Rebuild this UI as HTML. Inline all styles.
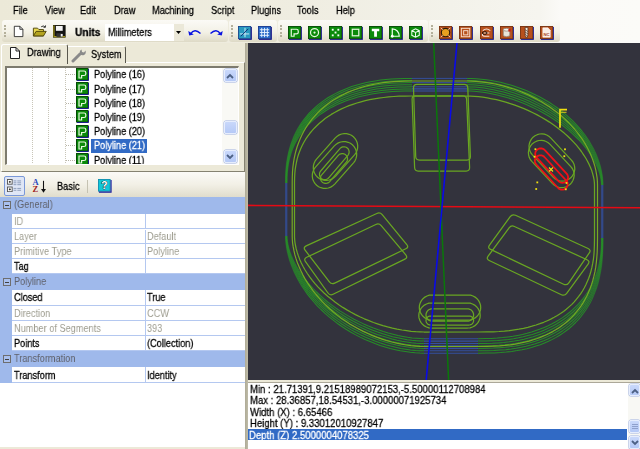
<!DOCTYPE html>
<html>
<head>
<meta charset="utf-8">
<title>CamBam</title>
<style>
*{box-sizing:border-box;margin:0;padding:0}
html,body{width:640px;height:449px;overflow:hidden;background:#ece9d8}
body{position:relative;font-family:"Liberation Sans",sans-serif;font-size:11px;color:#000;line-height:11px}
.t{position:absolute;white-space:nowrap;transform:scaleX(.835);transform-origin:0 0;line-height:11px;height:11px;will-change:transform;-webkit-text-stroke:0.28px currentColor}
.a{position:absolute;white-space:nowrap}
#menubar{left:0;top:0;width:640px;height:22px;background:linear-gradient(to right,#ece9d8 0,#efede1 300px,#f3f2ea 450px,#f6f5ef 540px,#fbfaf7 560px,#fbfbf8 640px)}

#toolbar{left:0;top:22px;width:640px;height:21px;background:linear-gradient(to right,#ece9d8 0,#f0eee3 430px,#fbfaf7 560px,#fbfbf8 640px)}
.tstrip{position:absolute;top:-1.6px;height:21.8px;background:linear-gradient(to bottom,#fbfaf6 0,#f3f1e6 55%,#dedac6 100%);border-radius:3px 3px 3px 3px}
.grip{position:absolute;top:3.2px;width:1.6px;height:13.8px;background:repeating-linear-gradient(to bottom,#b4b09b 0,#b4b09b 1.6px,transparent 1.6px,transparent 3.45px)}
.ic{position:absolute;top:3.5px;width:14px;height:14px}
#viewport{left:248px;top:43px;width:392px;height:337px;background:#33333d;overflow:hidden}
#left{left:0;top:43px;width:248px;height:406px;background:#ece9d8}
.tab{position:absolute;height:19px;border:1px solid #919b9c;border-bottom:none;border-radius:3px 3px 0 0}
#tree{left:5px;top:22.5px;width:234px;height:99.2px;background:#fff;border:2px solid #7d7b6e;border-right:1px solid #fff;border-bottom:1px solid #fff;overflow:hidden}
.trow{position:absolute;left:0;width:215px;height:14px}
.trow .ti{position:absolute;left:69px;top:0;width:13px;height:13px}
.trow .tt{left:86.5px;top:1.6px}
.vdot{position:absolute;top:0;width:1px;height:100px;background:repeating-linear-gradient(to bottom,#c8c5b8 0,#c8c5b8 1px,transparent 1px,transparent 2px)}
.hdot{position:absolute;height:1px;background:repeating-linear-gradient(to right,#b8b5a8 0,#b8b5a8 1px,transparent 1px,transparent 2px)}
.sbv{position:absolute;background:#f9f9f5;}
.sbbtn{position:absolute;left:1px;width:14px;background:linear-gradient(to bottom,#c9d8fb,#b5c9f6);border:1px solid #e6edfd;border-radius:2px;box-shadow:0 0 0 0.5px #9db0e0}
#pgtool{left:0;top:129px;width:245px;height:25px;background:linear-gradient(to bottom,#fbfaf7 0,#f2f0e6 50%,#e0ddcc 100%)}
#pg{left:0;top:154px;width:245px;height:249.5px;background:#fff}
.cat{position:absolute;left:0;width:245px;background:#9fb9eb;color:#5f616a}
.cat .t{left:14.1px;top:1.9px}
.pm{position:absolute;z-index:2;left:2.5px;top:4.2px;width:8px;height:8px;border:1px solid #6e6e6e;background:#a9c0ee}
.pm:after{content:"";position:absolute;left:1px;top:2.5px;width:4px;height:1px;background:#404040}
.pr{position:absolute;left:0;width:245px;background:#fff;border-bottom:1.2px solid #b4c8f0}

.pr:after{content:"";position:absolute;left:145px;top:0;width:1px;bottom:0;background:#b4c8f0}
.pr .n{left:13.6px;top:3.4px}
.pr .v{left:146.8px;top:3.4px}
.ro{color:#9f9e91}
.ro .t,.cat .t{-webkit-text-stroke:0}
#info{left:248px;top:383px;width:392px;height:66px;background:#fff}
#info div.l{position:absolute;left:1px;height:12px}
#info .t{left:0.9px;top:0.6px;transform:scaleX(.868)}
</style>
</head>
<body>
<div id="menubar" class="a"><span class="t" style="left:12.7px;top:4.6px">File</span><span class="t" style="left:44.8px;top:4.6px">View</span><span class="t" style="left:80.3px;top:4.6px">Edit</span><span class="t" style="left:113.6px;top:4.6px">Draw</span><span class="t" style="left:151.8px;top:4.6px">Machining</span><span class="t" style="left:210.6px;top:4.6px">Script</span><span class="t" style="left:250.8px;top:4.6px">Plugins</span><span class="t" style="left:297px;top:4.6px">Tools</span><span class="t" style="left:335.6px;top:4.6px">Help</span></div>
<div id="toolbar" class="a"><div class="tstrip" style="left:2px;width:226px"></div><div class="tstrip" style="left:229px;width:48px"></div><div class="tstrip" style="left:278px;width:150px"></div><div class="tstrip" style="left:429px;width:130.5px"></div><div class="grip" style="left:4px"></div><div class="grip" style="left:231px"></div><div class="grip" style="left:280px"></div><div class="grip" style="left:431px"></div><svg class="a" style="left:13.4px;top:3.1px" width="11.2" height="12.9" viewBox="0 0 13 15"><path d="M1.5 1.5H8L11.5 5V13.5H1.5Z" fill="#fff" stroke="#222" stroke-width="1"/><path d="M8 1.5V5H11.5" fill="none" stroke="#222" stroke-width="1"/></svg><svg class="a" style="left:31.6px;top:2.2px" width="15.6" height="13.8" viewBox="0 0 17 15"><path d="M1.5 4.5H6L7.5 6H12.5V13H1.5Z" fill="#e8d850" stroke="#4a4208" stroke-width="1"/><path d="M1.5 13L4.5 8H15.5L12.5 13Z" fill="#b4a420" stroke="#4a4208" stroke-width="1"/><path d="M10 3Q12.5 1 14.5 3.5M14.5 3.5L12.5 3.5M14.5 3.5L14.8 1.5" fill="none" stroke="#222" stroke-width="1"/></svg><svg class="a" style="left:53px;top:3.4px" width="12.6" height="12.6" viewBox="0 0 13 13"><rect x="0.5" y="0.5" width="12" height="12" fill="#141414" stroke="#1a1a10"/><path d="M1 0.5V12H12.5" fill="none" stroke="#a89a18" stroke-width="1.2"/><rect x="3" y="1" width="7" height="5" fill="#f4f4f4"/><rect x="3.5" y="8.5" width="6.5" height="3.8" fill="#333"/><rect x="8" y="9.3" width="2" height="2.6" fill="#f4f4f4"/></svg><span class="t" style="left:75px;top:4.8px;font-weight:bold;transform:scaleX(.92)">Units</span><div class="a" style="left:105px;top:1.5px;width:79px;height:17.5px;background:#fff"></div><span class="t" style="left:108px;top:4.8px">Millimeters</span><div class="a" style="left:174px;top:1.5px;width:10px;height:17.5px;background:#ebe8d8"></div><svg class="a" style="left:176px;top:8.6px" width="5" height="3" viewBox="0 0 5 3"><path d="M0 0H5L2.5 3Z" fill="#000"/></svg><svg class="a" style="left:188px;top:5px" width="14" height="10" viewBox="0 0 14 10"><path d="M2.5 7Q6.5 0.8 12.5 6.5" fill="none" stroke="#0a14e0" stroke-width="1.4"/><path d="M0.3 4L1.2 8.6L5.8 7.6Z" fill="#0a14e0"/></svg><svg class="a" style="left:209px;top:5px" width="14" height="10" viewBox="0 0 14 10"><path d="M11.5 7Q7.5 0.8 1.5 6.5" fill="none" stroke="#0a14e0" stroke-width="1.4"/><path d="M13.7 4L12.8 8.6L8.2 7.6Z" fill="#0a14e0"/></svg><svg class="ic" style="left:238px" viewBox="0 0 15 15"><rect x="0.5" y="0.5" width="13" height="13" fill="#2a9ac0" stroke="#1a4a90"/><path d="M1 14.5H14.5V1" fill="none" stroke="#1c1c8c"/><path d="M2 8.5H12M7.5 2V12" stroke="#d8f0f8" stroke-width="1"/><path d="M3 11L11 3" stroke="#0a2a70" stroke-width="1"/></svg><svg class="ic" style="left:258px" viewBox="0 0 15 15"><rect x="0.5" y="0.5" width="13" height="13" fill="#2a6ac8" stroke="#1a3a90"/><path d="M1 14.5H14.5V1" fill="none" stroke="#1c1c8c"/><path d="M2 4H12M2 7H12M2 10H12M4 2V12M7 2V12M10 2V12" stroke="#e8f4ff" stroke-width="1"/></svg><svg class="ic" style="left:288.2px" viewBox="0 0 15 15"><rect x="0.5" y="0.5" width="13" height="13" fill="#0a8a0a" stroke="#064a06"/><path d="M1 14.5H14.5V1" fill="none" stroke="#1c1c8c" stroke-width="1"/><path d="M3.5 3.5H9Q11 3.5 11 5.5V7Q11 8.5 9 8.5H6.5V11H3.5Z" fill="none" stroke="#e8f8e0" stroke-width="1.3"/></svg><svg class="ic" style="left:308.4px" viewBox="0 0 15 15"><rect x="0.5" y="0.5" width="13" height="13" fill="#0a8a0a" stroke="#064a06"/><path d="M1 14.5H14.5V1" fill="none" stroke="#1c1c8c" stroke-width="1"/><circle cx="7" cy="7" r="4.3" fill="none" stroke="#e8f8e0" stroke-width="1.3"/><circle cx="7" cy="7" r="1.2" fill="#e8f8e0"/></svg><svg class="ic" style="left:328.6px" viewBox="0 0 15 15"><rect x="0.5" y="0.5" width="13" height="13" fill="#0a8a0a" stroke="#064a06"/><path d="M1 14.5H14.5V1" fill="none" stroke="#1c1c8c" stroke-width="1"/><g fill="#f0fff0"><rect x="3" y="3" width="2" height="2"/><rect x="9" y="3" width="2" height="2"/><rect x="6" y="6" width="2" height="2"/><rect x="3" y="9" width="2" height="2"/><rect x="9" y="9" width="2" height="2"/></g></svg><svg class="ic" style="left:348.8px" viewBox="0 0 15 15"><rect x="0.5" y="0.5" width="13" height="13" fill="#0a8a0a" stroke="#064a06"/><path d="M1 14.5H14.5V1" fill="none" stroke="#1c1c8c" stroke-width="1"/><rect x="3.5" y="3.5" width="7" height="7" fill="none" stroke="#e8f8e0" stroke-width="1.3"/></svg><svg class="ic" style="left:369.0px" viewBox="0 0 15 15"><rect x="0.5" y="0.5" width="13" height="13" fill="#0a8a0a" stroke="#064a06"/><path d="M1 14.5H14.5V1" fill="none" stroke="#1c1c8c" stroke-width="1"/><path d="M3 3H11V5.5H8.5V11.5H5.5V5.5H3Z" fill="#fff"/></svg><svg class="ic" style="left:389.2px" viewBox="0 0 15 15"><rect x="0.5" y="0.5" width="13" height="13" fill="#0a8a0a" stroke="#064a06"/><path d="M1 14.5H14.5V1" fill="none" stroke="#1c1c8c" stroke-width="1"/><path d="M3.5 11V3Q10.5 3.5 11 11Z" fill="none" stroke="#f0fff0" stroke-width="1.3"/><circle cx="3.5" cy="11" r="1.5" fill="#fff"/></svg><svg class="ic" style="left:409.4px" viewBox="0 0 15 15"><rect x="0.5" y="0.5" width="13" height="13" fill="#0a8a0a" stroke="#064a06"/><path d="M1 14.5H14.5V1" fill="none" stroke="#1c1c8c" stroke-width="1"/><path d="M3 5L7 3L11 5V10L7 12L3 10ZM3 5L7 7L11 5M7 7V12" fill="none" stroke="#f0fff0" stroke-width="1.1"/></svg><svg class="ic" style="left:439.2px" viewBox="0 0 15 15"><rect x="0.5" y="0.5" width="13" height="13" fill="#b8501c" stroke="#7a3210"/><path d="M1 14.5H14.5V1" fill="none" stroke="#1c1c8c" stroke-width="1"/><circle cx="7" cy="7" r="4.5" fill="#e8a020" stroke="#2a1a0a" stroke-width="1.2"/><path d="M2 2L4 4M12 2L10 4M2 12L4 10M12 12L10 10" stroke="#f0d8c0" stroke-width="1"/></svg><svg class="ic" style="left:459.3px" viewBox="0 0 15 15"><rect x="0.5" y="0.5" width="13" height="13" fill="#b8501c" stroke="#7a3210"/><path d="M1 14.5H14.5V1" fill="none" stroke="#1c1c8c" stroke-width="1"/><rect x="2.5" y="2.5" width="9" height="9" fill="none" stroke="#f8e0d0" stroke-width="1"/><rect x="5" y="5" width="4.5" height="4.5" fill="none" stroke="#f8e0d0" stroke-width="1"/></svg><svg class="ic" style="left:479.5px" viewBox="0 0 15 15"><rect x="0.5" y="0.5" width="13" height="13" fill="#b8501c" stroke="#7a3210"/><path d="M1 14.5H14.5V1" fill="none" stroke="#1c1c8c" stroke-width="1"/><path d="M3 5Q7 1.5 11 5M3 8Q1.5 10.5 5 11H10M4 7.5H10" fill="none" stroke="#f8e8e0" stroke-width="1.2"/><ellipse cx="5" cy="7.5" rx="2.5" ry="1.5" fill="none" stroke="#201008" stroke-width="1"/></svg><svg class="ic" style="left:499.6px" viewBox="0 0 15 15"><rect x="0.5" y="0.5" width="13" height="13" fill="#b8501c" stroke="#7a3210"/><path d="M1 14.5H14.5V1" fill="none" stroke="#1c1c8c" stroke-width="1"/><path d="M3.5 4V10.5Q7 12.5 10.5 10.5V4" fill="#e8e4d8" stroke="#8a8070" stroke-width="0.8"/><ellipse cx="7" cy="4" rx="3.5" ry="1.5" fill="#f8f4ec" stroke="#8a8070" stroke-width="0.8"/><rect x="9" y="3" width="2.5" height="3" fill="#c82010"/></svg><svg class="ic" style="left:519.8px" viewBox="0 0 15 15"><rect x="0.5" y="0.5" width="13" height="13" fill="#b8501c" stroke="#7a3210"/><path d="M1 14.5H14.5V1" fill="none" stroke="#1c1c8c" stroke-width="1"/><path d="M5.5 1.5H8.5V10L7 13L5.5 10Z" fill="#f4ece0" stroke="#503020" stroke-width="0.8"/><path d="M5.5 4L8.5 6M5.5 6.5L8.5 8.5M5.5 9L8.5 11" stroke="#503020" stroke-width="0.8"/></svg><svg class="ic" style="left:539.9px" viewBox="0 0 15 15"><rect x="0.5" y="0.5" width="13" height="13" fill="#b8501c" stroke="#7a3210"/><path d="M1 14.5H14.5V1" fill="none" stroke="#1c1c8c" stroke-width="1"/><path d="M3 2H8.5L11 4.5V12H3Z" fill="#fbeee6" stroke="#fff" stroke-width="0.6"/><text x="7" y="10.3" font-family="Liberation Sans,sans-serif" font-weight="bold" font-size="4.6" text-anchor="middle" fill="#a8401c">NC</text></svg></div>
<div id="left" class="a"><div class="a" style="left:1px;top:19px;width:244.3px;height:109.5px;border-top:1px solid #fff;border-left:1px solid #fff;border-bottom:1.6px solid #858271;border-right:1.5px solid #858271;background:#ece9d8"></div><div class="a" style="left:1px;top:0.5px;width:66.5px;height:20px;background:#ece9d8;border-top:1px solid #fff;border-left:1px solid #fff;border-right:1.2px solid #5a584e;border-radius:2.5px 2.5px 0 0"></div><div class="a" style="left:67.5px;top:2.5px;width:58.5px;height:17px;background:#ece9d8;border-top:1px solid #fff;border-right:1.2px solid #5a584e;border-radius:0 2.5px 0 0"></div><svg class="a" style="left:9px;top:3px" width="12" height="14" viewBox="0 0 12 14"><path d="M1.5 1.5H7L10.5 5V12.5H1.5Z" fill="#fff" stroke="#222" stroke-width="1"/><path d="M7 1.5V5H10.5" fill="none" stroke="#222" stroke-width="1"/></svg><span class="t" style="left:27px;top:4px">Drawing</span><svg class="a" style="left:71px;top:5px" width="16" height="15" viewBox="0 0 16 15"><path d="M2 13L9 6" stroke="#8a8a8a" stroke-width="3" stroke-linecap="round"/><path d="M9 6Q8 3 10.5 1.5L11 4L13 4.5L14.5 2.5Q15.5 5.5 13 7Q11 8 9 6Z" fill="#8a8a8a"/></svg><span class="t" style="left:90.8px;top:6px">System</span><div id="tree" class="a"><div class="vdot" style="left:25px"></div><div class="vdot" style="left:41px"></div><div class="vdot" style="left:58px"></div><div class="hdot" style="left:59px;top:6.9px;width:10px"></div><div class="trow" style="top:0.40px"><svg class="ti" viewBox="0 0 13 13"><rect x="0.5" y="0.5" width="11.5" height="11.5" fill="#0a8a0a" stroke="#064a06"/><path d="M1 12.5H12.5V1" fill="none" stroke="#1c1c8c"/><path d="M3 3H8Q9.8 3 9.8 4.8V6Q9.8 7.5 8 7.5H5.6V10H3Z" fill="none" stroke="#e8f8e0" stroke-width="1.2"/></svg><span class="t tt">Polyline (16)</span></div><div class="hdot" style="left:59px;top:21.1px;width:10px"></div><div class="trow" style="top:14.58px"><svg class="ti" viewBox="0 0 13 13"><rect x="0.5" y="0.5" width="11.5" height="11.5" fill="#0a8a0a" stroke="#064a06"/><path d="M1 12.5H12.5V1" fill="none" stroke="#1c1c8c"/><path d="M3 3H8Q9.8 3 9.8 4.8V6Q9.8 7.5 8 7.5H5.6V10H3Z" fill="none" stroke="#e8f8e0" stroke-width="1.2"/></svg><span class="t tt">Polyline (17)</span></div><div class="hdot" style="left:59px;top:35.3px;width:10px"></div><div class="trow" style="top:28.76px"><svg class="ti" viewBox="0 0 13 13"><rect x="0.5" y="0.5" width="11.5" height="11.5" fill="#0a8a0a" stroke="#064a06"/><path d="M1 12.5H12.5V1" fill="none" stroke="#1c1c8c"/><path d="M3 3H8Q9.8 3 9.8 4.8V6Q9.8 7.5 8 7.5H5.6V10H3Z" fill="none" stroke="#e8f8e0" stroke-width="1.2"/></svg><span class="t tt">Polyline (18)</span></div><div class="hdot" style="left:59px;top:49.4px;width:10px"></div><div class="trow" style="top:42.94px"><svg class="ti" viewBox="0 0 13 13"><rect x="0.5" y="0.5" width="11.5" height="11.5" fill="#0a8a0a" stroke="#064a06"/><path d="M1 12.5H12.5V1" fill="none" stroke="#1c1c8c"/><path d="M3 3H8Q9.8 3 9.8 4.8V6Q9.8 7.5 8 7.5H5.6V10H3Z" fill="none" stroke="#e8f8e0" stroke-width="1.2"/></svg><span class="t tt">Polyline (19)</span></div><div class="hdot" style="left:59px;top:63.6px;width:10px"></div><div class="trow" style="top:57.12px"><svg class="ti" viewBox="0 0 13 13"><rect x="0.5" y="0.5" width="11.5" height="11.5" fill="#0a8a0a" stroke="#064a06"/><path d="M1 12.5H12.5V1" fill="none" stroke="#1c1c8c"/><path d="M3 3H8Q9.8 3 9.8 4.8V6Q9.8 7.5 8 7.5H5.6V10H3Z" fill="none" stroke="#e8f8e0" stroke-width="1.2"/></svg><span class="t tt">Polyline (20)</span></div><div class="hdot" style="left:59px;top:77.8px;width:10px"></div><div class="trow" style="top:71.30px"><svg class="ti" viewBox="0 0 13 13"><rect x="0.5" y="0.5" width="11.5" height="11.5" fill="#0a8a0a" stroke="#064a06"/><path d="M1 12.5H12.5V1" fill="none" stroke="#1c1c8c"/><path d="M3 3H8Q9.8 3 9.8 4.8V6Q9.8 7.5 8 7.5H5.6V10H3Z" fill="none" stroke="#e8f8e0" stroke-width="1.2"/></svg><div class="a" style="left:84px;top:0;width:56px;height:14px;background:#316ac5"></div><span class="t tt" style="color:#fff">Polyline (21)</span></div><div class="hdot" style="left:59px;top:92.0px;width:10px"></div><div class="trow" style="top:85.48px"><svg class="ti" viewBox="0 0 13 13"><rect x="0.5" y="0.5" width="11.5" height="11.5" fill="#0a8a0a" stroke="#064a06"/><path d="M1 12.5H12.5V1" fill="none" stroke="#1c1c8c"/><path d="M3 3H8Q9.8 3 9.8 4.8V6Q9.8 7.5 8 7.5H5.6V10H3Z" fill="none" stroke="#e8f8e0" stroke-width="1.2"/></svg><span class="t tt">Polyline (11)</span></div><div class="sbv" style="left:215px;top:0;width:16px;height:98px"></div><div class="sbbtn" style="left:216.5px;top:1.5px;height:12.5px;width:13px"></div><svg class="a" style="left:219px;top:5px" width="8" height="6" viewBox="0 0 8 6"><path d="M1 5L4 2L7 5" fill="none" stroke="#4d6185" stroke-width="1.8"/></svg><div class="sbbtn" style="left:216.5px;top:53.5px;height:13px;width:13px"></div><div class="sbbtn" style="left:216.5px;top:82px;height:13px;width:13px"></div><svg class="a" style="left:219px;top:86.5px" width="8" height="6" viewBox="0 0 8 6"><path d="M1 1L4 4L7 1" fill="none" stroke="#4d6185" stroke-width="1.8"/></svg></div><div id="pgtool" class="a"><div class="a" style="left:4.4px;top:4.2px;width:20.8px;height:19.4px;background:#dfe6f6;border:1px solid #7a98d8;border-radius:2px"></div><svg class="a" style="left:7.3px;top:7.2px" width="15" height="13.2" viewBox="0 0 16 14"><rect x="0.5" y="0.5" width="5" height="5" fill="#fff" stroke="#555"/><rect x="0.5" y="8.5" width="5" height="5" fill="#fff" stroke="#555"/><path d="M2 3H4M3 2V4M2 11H4M3 10V12" stroke="#222" stroke-width="1"/><path d="M7 2H10M11 2H15M7 4H10M11 4H15M7 6H10M11 6H15M7 10H10M11 10H15M7 12H10M11 12H15" stroke="#8a9ab8" stroke-width="1"/></svg><span class="a" style="left:32.5px;top:5.6px;font-size:8.5px;color:#2a4ac0;font-family:'Liberation Serif',serif;font-weight:bold;line-height:9px">A</span><span class="a" style="left:32.5px;top:13px;font-size:8.5px;color:#a02020;font-family:'Liberation Serif',serif;font-weight:bold;line-height:9px">Z</span><svg class="a" style="left:40.3px;top:7.5px" width="7" height="14" viewBox="0 0 8 17"><path d="M4 1V13" stroke="#111" stroke-width="1.3"/><path d="M1 11L4 15.5L7 11Z" fill="#111"/></svg><span class="t" style="left:57.4px;top:9.2px">Basic</span><div class="a" style="left:87px;top:7.5px;width:1px;height:13px;background:#c5c2b2"></div><svg class="a" style="left:97.6px;top:6.8px" width="14" height="14" viewBox="0 0 15 15"><rect x="0.5" y="0.5" width="12.5" height="12.5" fill="#10c8d8" stroke="#1090b0"/><path d="M1 14H14V1" fill="none" stroke="#1c1c9c" stroke-width="1.2"/><text x="6.8" y="11.2" font-family="Liberation Sans,sans-serif" font-weight="bold" font-size="11" text-anchor="middle" fill="#fff" stroke="#111" stroke-width="0.8" paint-order="stroke">?</text></svg></div><div id="pg" class="a"><div class="a" style="left:0;top:0;width:12px;height:186.1px;background:#9fb9eb;z-index:1"></div><div class="cat" style="top:0px;height:16.9px"><i class="pm"></i><span class="t" style="top:2.3px">(General)</span></div><div class="pr ro" style="top:16.9px;height:15.6px"><span class="t n" style="top:2.35px">ID</span><span class="t v" style="top:2.35px"></span></div><div class="pr ro" style="top:32.5px;height:14.6px"><span class="t n" style="top:1.85px">Layer</span><span class="t v" style="top:1.85px">Default</span></div><div class="pr ro" style="top:47.1px;height:15.1px"><span class="t n" style="top:2.1px">Primitive Type</span><span class="t v" style="top:2.1px">Polyline</span></div><div class="pr" style="top:62.2px;height:15.0px"><span class="t n" style="top:2.05px">Tag</span><span class="t v" style="top:2.05px"></span></div><div class="cat" style="top:77.2px;height:16.0px"><i class="pm"></i><span class="t" style="top:1.85px">Polyline</span></div><div class="pr" style="top:93.2px;height:15.4px"><span class="t n" style="top:2.25px">Closed</span><span class="t v" style="top:2.25px">True</span></div><div class="pr ro" style="top:108.6px;height:15.3px"><span class="t n" style="top:2.2px">Direction</span><span class="t v" style="top:2.2px">CCW</span></div><div class="pr ro" style="top:123.9px;height:15.2px"><span class="t n" style="top:2.15px">Number of Segments</span><span class="t v" style="top:2.15px">393</span></div><div class="pr" style="top:139.1px;height:15.0px"><span class="t n" style="top:2.05px">Points</span><span class="t v" style="top:2.05px">(Collection)</span></div><div class="cat" style="top:154.1px;height:15.8px"><i class="pm"></i><span class="t" style="top:1.75px">Transformation</span></div><div class="pr" style="top:169.9px;height:16.2px"><span class="t n" style="top:2.65px">Transform</span><span class="t v" style="top:2.65px">Identity</span></div></div></div>
<div id="viewport" class="a"><svg width="392" height="337" viewBox="0 0 392 337" style="position:absolute;left:0;top:0">
<defs><linearGradient id="bg" gradientUnits="userSpaceOnUse" x1="37" y1="0" x2="355.5" y2="0"><stop offset="0" stop-color="#239c23" stop-opacity="0.4"/><stop offset="0.07" stop-color="#239c23" stop-opacity="0.85"/><stop offset="0.93" stop-color="#239c23" stop-opacity="0.85"/><stop offset="1" stop-color="#239c23" stop-opacity="0.4"/></linearGradient></defs>

<path d="M219.0,35.4L223.5,35.5L228.3,35.7L233.3,36.2L238.3,36.8L243.3,37.6L248.4,38.5L253.5,39.6L258.5,40.9L263.5,42.3L268.5,43.9L273.4,45.7L278.2,47.6L283.0,49.7L287.7,51.9L292.3,54.2L296.7,56.7L301.1,59.3L305.3,62.1L309.5,65.0L313.4,68.0L317.3,71.1L320.9,74.3L324.5,77.6L327.8,81.1L331.0,84.6L334.0,88.2L336.8,91.8L339.4,95.6L341.9,99.4L344.1,103.2L346.2,107.1L348.0,111.0L349.6,115.0L351.0,118.9L352.3,122.9L353.2,126.9L354.0,130.8L354.6,134.7L354.9,138.5L355.0,142.0" fill="none" stroke="url(#bg)" stroke-width="1.05" stroke-linejoin="round"/>
<path d="M355.0,195.0L354.9,203.6L354.7,210.0L354.3,215.8L353.8,221.1L353.1,226.2L352.2,231.0L351.2,235.6L350.1,240.0L348.8,244.3L347.3,248.4L345.7,252.4L344.0,256.2L342.1,260.0L340.0,263.5L337.8,267.0L335.5,270.3L333.0,273.5L330.4,276.6L327.6,279.5L324.7,282.3L321.7,285.0L318.5,287.5L315.2,289.9L311.7,292.2L308.1,294.4L304.4,296.4L300.5,298.3L296.5,300.0L292.3,301.7L288.0,303.1L283.5,304.5L278.9,305.7L274.0,306.7L269.0,307.6L263.8,308.4L258.3,309.1L252.5,309.6L246.3,309.9L239.4,310.1L230.0,310.2" fill="none" stroke="url(#bg)" stroke-width="1.05" stroke-linejoin="round"/>
<path d="M176.0,310.2L171.8,310.1L167.2,309.8L162.3,309.3L157.4,308.6L152.3,307.8L147.3,306.7L142.2,305.5L137.1,304.0L132.0,302.4L127.0,300.6L122.0,298.6L117.0,296.5L112.1,294.1L107.3,291.6L102.6,289.0L98.0,286.2L93.5,283.3L89.1,280.2L84.9,276.9L80.8,273.6L76.8,270.1L73.0,266.5L69.3,262.8L65.9,259.0L62.6,255.1L59.4,251.1L56.5,247.0L53.7,242.9L51.2,238.7L48.9,234.5L46.7,230.2L44.8,225.9L43.1,221.6L41.6,217.3L40.4,213.0L39.3,208.8L38.5,204.6L38.0,200.5L37.6,196.5L37.5,193.0" fill="none" stroke="url(#bg)" stroke-width="1.05" stroke-linejoin="round"/>
<path d="M37.5,140.0L37.6,133.3L37.8,128.0L38.2,123.1L38.8,118.4L39.6,114.0L40.5,109.7L41.6,105.5L42.8,101.5L44.2,97.6L45.7,93.8L47.5,90.1L49.3,86.6L51.4,83.1L53.5,79.8L55.9,76.6L58.4,73.5L61.0,70.4L63.8,67.6L66.7,64.8L69.8,62.1L73.0,59.6L76.4,57.1L79.9,54.8L83.5,52.7L87.3,50.6L91.2,48.7L95.2,46.9L99.4,45.2L103.7,43.6L108.1,42.2L112.7,40.9L117.4,39.8L122.3,38.8L127.3,37.9L132.5,37.1L137.9,36.5L143.5,36.0L149.5,35.7L156.0,35.5L164.0,35.4" fill="none" stroke="url(#bg)" stroke-width="1.05" stroke-linejoin="round"/>
<path d="M164.0,35.4L219.0,35.4" fill="none" stroke="#3458b8" stroke-width="0.9" stroke-opacity="0.85"/>
<path d="M230.0,310.2L176.0,310.2" fill="none" stroke="#3458b8" stroke-width="1.1" stroke-opacity="0.8"/>
<path d="M219.0,37.5L223.3,37.6L228.0,37.8L232.8,38.3L237.8,38.9L242.7,39.6L247.8,40.6L252.8,41.7L257.8,42.9L262.8,44.4L267.7,46.0L272.6,47.7L277.5,49.6L282.2,51.6L286.9,53.8L291.5,56.2L296.0,58.6L300.4,61.2L304.7,64.0L308.8,66.8L312.8,69.8L316.7,72.9L320.4,76.1L323.9,79.3L327.3,82.7L330.5,86.2L333.5,89.7L336.4,93.3L339.0,97.0L341.5,100.7L343.8,104.5L345.8,108.3L347.7,112.1L349.3,116.0L350.8,119.9L352.0,123.7L353.0,127.6L353.7,131.4L354.3,135.1L354.6,138.7L354.8,142.0" fill="none" stroke="url(#bg)" stroke-width="1.05" stroke-linejoin="round"/>
<path d="M354.8,195.0L354.7,203.2L354.4,209.3L354.0,214.9L353.5,220.1L352.8,225.0L351.9,229.7L350.9,234.2L349.8,238.5L348.5,242.7L347.0,246.8L345.4,250.7L343.6,254.5L341.7,258.1L339.6,261.6L337.4,265.0L335.1,268.3L332.6,271.5L329.9,274.5L327.1,277.4L324.2,280.2L321.1,282.8L317.9,285.3L314.6,287.7L311.1,290.0L307.5,292.1L303.7,294.1L299.8,296.0L295.8,297.7L291.6,299.3L287.3,300.8L282.8,302.1L278.1,303.3L273.3,304.3L268.3,305.2L263.2,306.0L257.7,306.7L252.0,307.1L245.8,307.5L239.0,307.7L230.0,307.8" fill="none" stroke="url(#bg)" stroke-width="1.05" stroke-linejoin="round"/>
<path d="M176.0,307.8L172.0,307.7L167.4,307.4L162.6,306.9L157.7,306.2L152.8,305.4L147.7,304.3L142.7,303.1L137.6,301.7L132.5,300.1L127.5,298.3L122.5,296.3L117.6,294.2L112.7,291.9L107.9,289.5L103.2,286.9L98.6,284.1L94.1,281.2L89.7,278.1L85.4,275.0L81.3,271.6L77.3,268.2L73.5,264.7L69.8,261.0L66.3,257.3L63.0,253.5L59.8,249.5L56.9,245.6L54.1,241.5L51.5,237.4L49.2,233.3L47.0,229.1L45.1,224.9L43.4,220.7L41.9,216.5L40.6,212.3L39.6,208.2L38.8,204.1L38.2,200.1L37.9,196.4L37.8,193.0" fill="none" stroke="url(#bg)" stroke-width="1.05" stroke-linejoin="round"/>
<path d="M37.8,140.0L37.8,133.5L38.1,128.3L38.5,123.5L39.1,119.0L39.8,114.6L40.7,110.4L41.8,106.3L43.0,102.4L44.4,98.6L46.0,94.9L47.7,91.3L49.6,87.8L51.6,84.4L53.8,81.1L56.2,78.0L58.7,74.9L61.3,71.9L64.1,69.1L67.0,66.4L70.1,63.8L73.3,61.3L76.7,58.9L80.2,56.6L83.8,54.5L87.6,52.4L91.5,50.5L95.5,48.8L99.7,47.1L104.0,45.6L108.4,44.2L113.0,42.9L117.7,41.8L122.5,40.8L127.6,39.9L132.7,39.2L138.1,38.6L143.7,38.1L149.6,37.8L156.1,37.6L164.0,37.5" fill="none" stroke="url(#bg)" stroke-width="1.05" stroke-linejoin="round"/>
<path d="M230.0,307.8L176.0,307.8" fill="none" stroke="#3458b8" stroke-width="1.1" stroke-opacity="0.8"/>
<path d="M354.8,142.0L354.8,195.0" fill="none" stroke="#3458b8" stroke-width="1.0" stroke-opacity="0.75"/>
<path d="M37.8,193.0L37.8,140.0" fill="none" stroke="#3458b8" stroke-width="1.0" stroke-opacity="0.75"/>
<path d="M219.0,39.6L223.1,39.7L227.6,39.9L232.4,40.4L237.2,41.0L242.2,41.7L247.1,42.7L252.1,43.7L257.1,45.0L262.0,46.4L267.0,48.0L271.9,49.7L276.7,51.6L281.5,53.6L286.2,55.8L290.8,58.1L295.3,60.6L299.7,63.1L304.0,65.8L308.1,68.7L312.2,71.6L316.0,74.6L319.8,77.8L323.3,81.0L326.8,84.3L330.0,87.8L333.0,91.2L335.9,94.8L338.6,98.4L341.1,102.1L343.4,105.7L345.5,109.5L347.3,113.2L349.0,117.0L350.5,120.8L351.7,124.5L352.7,128.2L353.5,131.9L354.0,135.5L354.4,138.9L354.5,142.0" fill="none" stroke="url(#bg)" stroke-width="1.05" stroke-linejoin="round"/>
<path d="M354.5,195.0L354.4,202.7L354.2,208.6L353.8,214.0L353.2,219.0L352.5,223.8L351.7,228.4L350.6,232.8L349.5,237.0L348.1,241.1L346.7,245.1L345.0,249.0L343.2,252.7L341.3,256.3L339.2,259.7L337.0,263.1L334.6,266.3L332.1,269.4L329.4,272.4L326.6,275.3L323.6,278.0L320.5,280.6L317.3,283.1L313.9,285.5L310.4,287.7L306.8,289.8L303.0,291.8L299.1,293.7L295.1,295.4L290.9,297.0L286.5,298.4L282.1,299.7L277.4,300.9L272.6,301.9L267.7,302.9L262.5,303.6L257.1,304.2L251.4,304.7L245.4,305.1L238.7,305.3L230.0,305.4" fill="none" stroke="url(#bg)" stroke-width="1.05" stroke-linejoin="round"/>
<path d="M176.0,305.4L172.1,305.3L167.6,305.0L162.9,304.5L158.1,303.8L153.2,303.0L148.2,302.0L143.2,300.7L138.1,299.3L133.1,297.7L128.1,296.0L123.1,294.1L118.1,292.0L113.3,289.7L108.5,287.3L103.7,284.7L99.1,282.0L94.6,279.1L90.2,276.1L85.9,273.0L81.8,269.7L77.8,266.3L73.9,262.9L70.2,259.3L66.7,255.6L63.4,251.8L60.2,248.0L57.2,244.1L54.5,240.1L51.9,236.1L49.5,232.0L47.4,227.9L45.4,223.8L43.7,219.7L42.2,215.6L40.9,211.6L39.9,207.6L39.1,203.6L38.5,199.8L38.1,196.2L38.0,193.0" fill="none" stroke="url(#bg)" stroke-width="1.05" stroke-linejoin="round"/>
<path d="M38.0,140.0L38.1,133.7L38.3,128.7L38.7,124.0L39.3,119.5L40.1,115.3L41.0,111.1L42.1,107.2L43.3,103.3L44.7,99.6L46.3,95.9L48.0,92.4L49.9,89.0L51.9,85.7L54.1,82.4L56.4,79.3L58.9,76.3L61.6,73.4L64.4,70.6L67.3,68.0L70.4,65.4L73.6,62.9L77.0,60.6L80.5,58.4L84.1,56.3L87.9,54.3L91.8,52.4L95.8,50.7L100.0,49.1L104.3,47.6L108.7,46.2L113.3,44.9L118.0,43.8L122.8,42.8L127.8,42.0L133.0,41.3L138.3,40.7L143.9,40.2L149.8,39.9L156.1,39.7L164.0,39.6" fill="none" stroke="url(#bg)" stroke-width="1.05" stroke-linejoin="round"/>
<path d="M164.0,39.6L219.0,39.6" fill="none" stroke="#3458b8" stroke-width="0.9" stroke-opacity="0.85"/>
<path d="M230.0,305.4L176.0,305.4" fill="none" stroke="#3458b8" stroke-width="1.1" stroke-opacity="0.8"/>
<path d="M219.0,41.7L222.9,41.8L227.3,42.0L231.9,42.5L236.7,43.1L241.6,43.8L246.5,44.7L251.4,45.8L256.3,47.1L261.3,48.5L266.2,50.0L271.1,51.8L275.9,53.6L280.7,55.6L285.4,57.8L290.0,60.1L294.5,62.5L299.0,65.0L303.3,67.7L307.5,70.5L311.5,73.4L315.4,76.4L319.2,79.5L322.8,82.7L326.2,86.0L329.5,89.3L332.6,92.8L335.5,96.2L338.2,99.8L340.7,103.4L343.0,107.0L345.1,110.6L347.0,114.3L348.7,118.0L350.2,121.6L351.4,125.3L352.4,128.9L353.2,132.4L353.8,135.8L354.1,139.1L354.2,142.0" fill="none" stroke="url(#bg)" stroke-width="1.05" stroke-linejoin="round"/>
<path d="M354.2,195.0L354.2,202.3L353.9,207.9L353.5,213.1L353.0,218.0L352.3,222.7L351.4,227.1L350.4,231.4L349.2,235.6L347.8,239.6L346.3,243.5L344.7,247.3L342.9,250.9L340.9,254.4L338.8,257.8L336.5,261.1L334.1,264.3L331.6,267.4L328.9,270.3L326.1,273.2L323.1,275.9L320.0,278.5L316.7,280.9L313.3,283.3L309.8,285.5L306.1,287.6L302.3,289.5L298.4,291.4L294.3,293.1L290.1,294.6L285.8,296.1L281.3,297.4L276.7,298.5L271.9,299.6L267.0,300.5L261.8,301.2L256.5,301.8L250.9,302.3L244.9,302.7L238.4,302.9L230.0,302.9" fill="none" stroke="url(#bg)" stroke-width="1.05" stroke-linejoin="round"/>
<path d="M176.0,302.9L172.2,302.9L167.9,302.6L163.2,302.1L158.5,301.4L153.6,300.6L148.6,299.6L143.7,298.4L138.6,297.0L133.6,295.4L128.6,293.7L123.6,291.8L118.7,289.7L113.8,287.5L109.0,285.1L104.3,282.6L99.7,279.9L95.1,277.1L90.7,274.1L86.4,271.0L82.3,267.8L78.3,264.5L74.4,261.1L70.7,257.5L67.2,253.9L63.8,250.2L60.6,246.5L57.6,242.6L54.8,238.7L52.2,234.8L49.9,230.8L47.7,226.8L45.7,222.8L44.0,218.8L42.5,214.8L41.2,210.9L40.1,207.0L39.3,203.2L38.7,199.5L38.4,196.0L38.2,193.0" fill="none" stroke="url(#bg)" stroke-width="1.05" stroke-linejoin="round"/>
<path d="M38.2,140.0L38.3,133.9L38.6,129.0L39.0,124.4L39.6,120.1L40.3,115.9L41.2,111.9L42.3,108.0L43.6,104.2L45.0,100.5L46.5,97.0L48.3,93.5L50.1,90.2L52.2,86.9L54.4,83.8L56.7,80.7L59.2,77.8L61.9,74.9L64.6,72.2L67.6,69.6L70.7,67.0L73.9,64.6L77.3,62.3L80.8,60.2L84.4,58.1L88.2,56.1L92.1,54.3L96.1,52.6L100.2,51.0L104.5,49.5L109.0,48.2L113.5,46.9L118.2,45.9L123.0,44.9L128.0,44.0L133.2,43.3L138.5,42.7L144.1,42.3L149.9,42.0L156.2,41.8L164.0,41.7" fill="none" stroke="url(#bg)" stroke-width="1.05" stroke-linejoin="round"/>
<path d="M230.0,302.9L176.0,302.9" fill="none" stroke="#3458b8" stroke-width="1.1" stroke-opacity="0.8"/>
<path d="M219.0,43.8L222.7,43.9L227.0,44.1L231.5,44.6L236.2,45.1L241.0,45.9L245.8,46.8L250.7,47.9L255.6,49.1L260.5,50.5L265.4,52.1L270.3,53.8L275.1,55.6L279.9,57.6L284.6,59.7L289.3,62.0L293.8,64.4L298.2,66.9L302.6,69.6L306.8,72.3L310.9,75.2L314.8,78.2L318.6,81.2L322.2,84.4L325.7,87.6L329.0,90.9L332.1,94.3L335.0,97.7L337.8,101.2L340.3,104.7L342.6,108.2L344.8,111.8L346.7,115.4L348.4,118.9L349.9,122.5L351.1,126.0L352.2,129.5L353.0,132.9L353.5,136.2L353.9,139.3L354.0,142.0" fill="none" stroke="url(#bg)" stroke-width="1.05" stroke-linejoin="round"/>
<path d="M354.0,195.0L353.9,201.8L353.7,207.3L353.3,212.3L352.7,217.0L352.0,221.5L351.1,225.9L350.1,230.1L348.9,234.1L347.5,238.1L346.0,241.9L344.3,245.6L342.5,249.1L340.5,252.6L338.4,256.0L336.1,259.2L333.7,262.4L331.1,265.4L328.4,268.3L325.5,271.1L322.5,273.7L319.4,276.3L316.1,278.7L312.7,281.0L309.1,283.2L305.5,285.3L301.6,287.2L297.7,289.0L293.6,290.7L289.4,292.3L285.1,293.7L280.6,295.0L276.0,296.2L271.2,297.2L266.3,298.1L261.2,298.8L255.9,299.4L250.3,299.9L244.4,300.3L238.0,300.5L230.0,300.5" fill="none" stroke="url(#bg)" stroke-width="1.05" stroke-linejoin="round"/>
<path d="M176.0,300.5L172.4,300.4L168.1,300.2L163.5,299.7L158.8,299.0L154.0,298.2L149.1,297.2L144.1,296.0L139.2,294.6L134.2,293.1L129.2,291.4L124.2,289.5L119.3,287.5L114.4,285.3L109.6,282.9L104.9,280.4L100.2,277.8L95.7,275.0L91.3,272.1L87.0,269.1L82.8,265.9L78.7,262.6L74.9,259.3L71.1,255.8L67.6,252.3L64.2,248.6L61.0,244.9L58.0,241.2L55.2,237.4L52.6,233.5L50.2,229.6L48.0,225.7L46.0,221.8L44.3,217.9L42.8,214.0L41.5,210.2L40.4,206.4L39.6,202.7L39.0,199.2L38.6,195.8L38.5,193.0" fill="none" stroke="url(#bg)" stroke-width="1.05" stroke-linejoin="round"/>
<path d="M38.5,140.0L38.6,134.1L38.8,129.3L39.3,124.8L39.8,120.6L40.6,116.5L41.5,112.6L42.6,108.8L43.8,105.1L45.2,101.5L46.8,98.0L48.5,94.6L50.4,91.3L52.4,88.2L54.6,85.1L57.0,82.1L59.5,79.2L62.1,76.4L64.9,73.7L67.9,71.1L71.0,68.7L74.2,66.3L77.5,64.1L81.0,61.9L84.7,59.9L88.4,58.0L92.3,56.2L96.4,54.5L100.5,52.9L104.8,51.5L109.2,50.2L113.8,49.0L118.5,47.9L123.3,46.9L128.3,46.1L133.4,45.4L138.7,44.8L144.2,44.4L150.1,44.1L156.3,43.9L164.0,43.8" fill="none" stroke="url(#bg)" stroke-width="1.05" stroke-linejoin="round"/>
<path d="M164.0,43.8L219.0,43.8" fill="none" stroke="#3458b8" stroke-width="0.9" stroke-opacity="0.85"/>
<path d="M230.0,300.5L176.0,300.5" fill="none" stroke="#3458b8" stroke-width="1.1" stroke-opacity="0.8"/>
<path d="M219.0,45.9L222.5,46.0L226.7,46.2L231.1,46.7L235.7,47.2L240.4,48.0L245.2,48.9L250.0,50.0L254.9,51.2L259.8,52.6L264.7,54.1L269.5,55.8L274.3,57.6L279.1,59.6L283.8,61.7L288.5,63.9L293.0,66.3L297.5,68.8L301.9,71.4L306.1,74.1L310.2,77.0L314.2,79.9L318.0,82.9L321.6,86.0L325.1,89.2L328.4,92.4L331.6,95.8L334.6,99.1L337.3,102.5L339.9,106.0L342.2,109.4L344.4,112.9L346.3,116.4L348.1,119.9L349.6,123.3L350.8,126.8L351.9,130.1L352.7,133.4L353.3,136.5L353.6,139.5L353.8,142.0" fill="none" stroke="url(#bg)" stroke-width="1.05" stroke-linejoin="round"/>
<path d="M353.8,195.0L353.7,201.4L353.4,206.6L353.0,211.5L352.4,216.0L351.7,220.4L350.8,224.6L349.8,228.7L348.5,232.7L347.2,236.5L345.6,240.3L343.9,243.9L342.1,247.4L340.1,250.8L337.9,254.1L335.6,257.3L333.2,260.4L330.6,263.4L327.9,266.2L325.0,269.0L321.9,271.6L318.8,274.1L315.5,276.5L312.0,278.8L308.5,281.0L304.8,283.0L300.9,284.9L297.0,286.7L292.9,288.4L288.7,289.9L284.3,291.4L279.8,292.6L275.2,293.8L270.5,294.8L265.6,295.7L260.5,296.4L255.2,297.0L249.7,297.5L244.0,297.8L237.7,298.0L230.0,298.1" fill="none" stroke="url(#bg)" stroke-width="1.05" stroke-linejoin="round"/>
<path d="M176.0,298.1L172.5,298.0L168.3,297.7L163.8,297.3L159.2,296.7L154.4,295.8L149.6,294.8L144.6,293.7L139.7,292.3L134.7,290.8L129.7,289.1L124.8,287.3L119.9,285.2L115.0,283.1L110.2,280.8L105.4,278.3L100.8,275.7L96.2,273.0L91.8,270.1L87.5,267.1L83.3,264.0L79.2,260.8L75.3,257.5L71.6,254.1L68.0,250.6L64.6,247.0L61.4,243.4L58.4,239.7L55.6,236.0L52.9,232.2L50.5,228.4L48.3,224.6L46.3,220.8L44.6,217.0L43.0,213.2L41.7,209.5L40.7,205.9L39.8,202.3L39.2,198.9L38.9,195.7L38.8,193.0" fill="none" stroke="url(#bg)" stroke-width="1.05" stroke-linejoin="round"/>
<path d="M38.8,140.0L38.8,134.3L39.1,129.6L39.5,125.3L40.1,121.1L40.8,117.2L41.8,113.3L42.8,109.6L44.1,106.0L45.5,102.5L47.1,99.1L48.8,95.7L50.7,92.5L52.7,89.4L54.9,86.4L57.3,83.5L59.8,80.6L62.4,77.9L65.2,75.3L68.2,72.7L71.2,70.3L74.5,68.0L77.8,65.8L81.3,63.7L85.0,61.7L88.7,59.8L92.6,58.0L96.7,56.4L100.8,54.9L105.1,53.4L109.5,52.1L114.0,51.0L118.7,49.9L123.5,49.0L128.5,48.2L133.6,47.5L138.9,46.9L144.4,46.5L150.2,46.2L156.4,46.0L164.0,45.9" fill="none" stroke="url(#bg)" stroke-width="1.05" stroke-linejoin="round"/>
<path d="M164.0,45.9L219.0,45.9" fill="none" stroke="#3458b8" stroke-width="1.2" stroke-opacity="0.85"/>
<path d="M230.0,298.1L176.0,298.1" fill="none" stroke="#3458b8" stroke-width="1.1" stroke-opacity="0.8"/>
<path d="M353.8,142.0L353.8,195.0" fill="none" stroke="#3458b8" stroke-width="1.0" stroke-opacity="0.75"/>
<path d="M38.8,193.0L38.8,140.0" fill="none" stroke="#3458b8" stroke-width="1.0" stroke-opacity="0.75"/>
<path d="M219.0,48.0L222.3,48.1L226.3,48.3L230.6,48.7L235.1,49.3L239.8,50.1L244.5,51.0L249.3,52.0L254.1,53.2L259.0,54.6L263.9,56.1L268.7,57.8L273.5,59.6L278.3,61.6L283.1,63.7L287.7,65.9L292.3,68.2L296.8,70.7L301.1,73.3L305.4,76.0L309.5,78.7L313.5,81.6L317.3,84.6L321.0,87.7L324.6,90.8L327.9,94.0L331.1,97.2L334.1,100.5L336.9,103.9L339.5,107.2L341.9,110.6L344.0,114.0L346.0,117.4L347.7,120.8L349.3,124.2L350.6,127.5L351.6,130.7L352.4,133.9L353.0,136.9L353.4,139.7L353.5,142.0" fill="none" stroke="url(#bg)" stroke-width="1.05" stroke-linejoin="round"/>
<path d="M353.5,195.0L353.4,201.0L353.2,206.0L352.8,210.6L352.2,215.1L351.4,219.3L350.5,223.4L349.5,227.4L348.2,231.3L346.8,235.0L345.3,238.7L343.6,242.2L341.7,245.7L339.7,249.0L337.5,252.3L335.2,255.4L332.7,258.4L330.1,261.4L327.3,264.2L324.4,266.9L321.4,269.5L318.2,272.0L314.9,274.4L311.4,276.6L307.8,278.8L304.1,280.8L300.2,282.7L296.3,284.4L292.2,286.1L287.9,287.6L283.6,289.0L279.1,290.3L274.5,291.4L269.7,292.4L264.9,293.3L259.8,294.0L254.6,294.6L249.2,295.1L243.5,295.4L237.4,295.6L230.0,295.7" fill="none" stroke="url(#bg)" stroke-width="1.05" stroke-linejoin="round"/>
<path d="M176.0,295.7L172.6,295.6L168.5,295.3L164.1,294.9L159.6,294.3L154.8,293.4L150.0,292.5L145.1,291.3L140.2,290.0L135.3,288.5L130.3,286.8L125.4,285.0L120.4,283.0L115.6,280.9L110.8,278.6L106.0,276.2L101.4,273.6L96.8,270.9L92.3,268.1L88.0,265.2L83.8,262.1L79.7,259.0L75.8,255.7L72.1,252.4L68.5,249.0L65.1,245.5L61.8,241.9L58.8,238.3L55.9,234.7L53.3,231.0L50.9,227.3L48.6,223.5L46.6,219.8L44.9,216.1L43.3,212.5L42.0,208.9L40.9,205.3L40.1,201.9L39.5,198.6L39.1,195.5L39.0,193.0" fill="none" stroke="url(#bg)" stroke-width="1.05" stroke-linejoin="round"/>
<path d="M39.0,140.0L39.1,134.5L39.3,129.9L39.8,125.7L40.3,121.7L41.1,117.8L42.0,114.0L43.1,110.4L44.3,106.9L45.7,103.4L47.3,100.1L49.0,96.9L50.9,93.7L53.0,90.6L55.2,87.7L57.5,84.8L60.0,82.0L62.7,79.4L65.5,76.8L68.4,74.3L71.5,71.9L74.8,69.7L78.1,67.5L81.6,65.4L85.3,63.5L89.0,61.6L92.9,59.9L96.9,58.3L101.1,56.8L105.4,55.4L109.8,54.1L114.3,53.0L119.0,51.9L123.8,51.0L128.7,50.2L133.8,49.5L139.1,49.0L144.6,48.6L150.3,48.2L156.5,48.1L164.0,48.0" fill="none" stroke="url(#bg)" stroke-width="1.05" stroke-linejoin="round"/>
<path d="M164.0,48.0L219.0,48.0" fill="none" stroke="#3458b8" stroke-width="1.2" stroke-opacity="0.85"/>
<path d="M230.0,295.7L176.0,295.7" fill="none" stroke="#3458b8" stroke-width="1.1" stroke-opacity="0.8"/>
<path d="M164.0,38.0L219.0,38.0L219.0,38.0L223.3,38.1L228.0,38.3L232.7,38.8L237.5,39.3L242.4,40.1L247.2,41.0L252.1,42.1L256.9,43.4L261.7,44.8L266.5,46.3L271.2,48.0L275.8,49.9L280.4,51.9L284.9,54.1L289.3,56.4L293.6,58.8L297.8,61.4L301.8,64.0L305.8,66.9L309.6,69.8L313.3,72.8L316.8,76.0L320.2,79.2L323.4,82.6L326.5,86.0L329.3,89.5L332.0,93.1L334.6,96.7L336.9,100.4L339.1,104.2L341.0,108.0L342.8,111.8L344.3,115.6L345.7,119.5L346.9,123.4L347.8,127.2L348.5,131.1L349.1,134.9L349.4,138.6L349.5,142.0L349.5,142.0L349.5,195.0L349.5,195.0L349.4,203.1L349.2,209.2L348.8,214.6L348.3,219.6L347.7,224.4L346.9,228.9L345.9,233.2L344.8,237.4L343.6,241.4L342.2,245.3L340.6,249.1L339.0,252.7L337.1,256.2L335.2,259.6L333.1,262.8L330.9,265.9L328.5,268.9L326.0,271.8L323.3,274.6L320.6,277.2L317.7,279.7L314.6,282.1L311.4,284.4L308.1,286.6L304.7,288.6L301.1,290.5L297.4,292.3L293.5,293.9L289.5,295.5L285.4,296.8L281.1,298.1L276.7,299.2L272.1,300.2L267.3,301.1L262.3,301.8L257.1,302.4L251.6,302.9L245.6,303.2L239.0,303.4L230.0,303.5L230.0,303.5L176.0,303.5L176.0,303.5L172.0,303.4L167.6,303.1L163.0,302.7L158.3,302.0L153.5,301.2L148.7,300.2L143.8,299.0L139.0,297.7L134.1,296.1L129.3,294.4L124.6,292.6L119.9,290.5L115.2,288.4L110.7,286.0L106.2,283.5L101.8,280.9L97.5,278.1L93.3,275.2L89.3,272.1L85.4,269.0L81.6,265.7L78.0,262.3L74.5,258.8L71.2,255.2L68.0,251.5L65.1,247.8L62.3,243.9L59.7,240.1L57.2,236.1L55.0,232.1L53.0,228.1L51.2,224.0L49.5,220.0L48.1,215.9L46.9,211.9L46.0,207.9L45.2,203.9L44.6,200.1L44.3,196.3L44.2,193.0L44.2,193.0L44.2,140.0L44.2,140.0L44.3,133.9L44.5,128.8L44.9,124.1L45.5,119.7L46.2,115.4L47.1,111.2L48.1,107.2L49.3,103.3L50.7,99.5L52.2,95.8L53.8,92.2L55.6,88.7L57.6,85.3L59.7,82.0L62.0,78.8L64.4,75.7L66.9,72.8L69.6,69.9L72.4,67.2L75.4,64.5L78.5,62.0L81.7,59.6L85.0,57.3L88.5,55.2L92.1,53.1L95.9,51.2L99.7,49.4L103.7,47.7L107.8,46.2L112.0,44.8L116.4,43.5L120.9,42.4L125.5,41.3L130.2,40.5L135.1,39.7L140.1,39.1L145.4,38.6L150.9,38.3L156.8,38.1L164.0,38.0Z" fill="none" stroke="#76a824" stroke-width="1.2" stroke-linejoin="round"/>
<path d="M164.0,53.0L219.0,53.0L219.0,53.0L222.4,53.1L226.3,53.3L230.5,53.7L234.9,54.2L239.3,54.9L243.9,55.8L248.5,56.7L253.1,57.9L257.7,59.2L262.3,60.6L266.9,62.1L271.5,63.8L276.0,65.6L280.5,67.6L284.9,69.7L289.2,71.9L293.4,74.2L297.5,76.6L301.5,79.1L305.4,81.7L309.1,84.4L312.7,87.2L316.2,90.1L319.5,93.0L322.6,96.0L325.6,99.1L328.4,102.2L331.0,105.4L333.4,108.5L335.6,111.8L337.7,115.0L339.5,118.2L341.1,121.4L342.5,124.6L343.8,127.8L344.7,130.9L345.5,134.0L346.1,136.9L346.4,139.7L346.5,142.0L346.5,142.0L346.5,195.0L346.5,195.0L346.4,202.1L346.2,207.3L345.9,212.0L345.4,216.3L344.7,220.4L343.9,224.4L343.0,228.1L341.9,231.7L340.7,235.2L339.3,238.6L337.9,241.8L336.2,245.0L334.5,248.0L332.6,250.9L330.5,253.7L328.3,256.4L326.0,259.1L323.6,261.6L321.0,263.9L318.3,266.2L315.5,268.4L312.5,270.5L309.4,272.5L306.2,274.3L302.8,276.1L299.3,277.7L295.7,279.3L291.9,280.7L288.1,282.0L284.0,283.2L279.9,284.3L275.5,285.3L271.0,286.2L266.4,286.9L261.5,287.6L256.4,288.1L251.0,288.5L245.2,288.8L238.7,288.9L230.0,289.0L230.0,289.0L176.0,289.0L176.0,289.0L172.1,288.9L167.7,288.7L163.2,288.3L158.6,287.7L153.9,287.0L149.1,286.1L144.4,285.1L139.6,283.9L134.9,282.6L130.2,281.1L125.5,279.5L120.9,277.7L116.3,275.8L111.8,273.8L107.4,271.6L103.1,269.3L98.9,266.9L94.8,264.4L90.8,261.8L87.0,259.0L83.3,256.1L79.7,253.2L76.3,250.2L73.0,247.0L69.9,243.9L67.0,240.6L64.3,237.3L61.7,233.9L59.3,230.5L57.1,227.0L55.1,223.5L53.3,220.0L51.7,216.4L50.4,212.9L49.2,209.4L48.2,205.9L47.5,202.5L46.9,199.1L46.6,195.9L46.5,193.0L46.5,193.0L46.5,140.0L46.5,140.0L46.6,134.8L46.8,130.5L47.2,126.5L47.8,122.7L48.5,119.0L49.3,115.4L50.3,112.0L51.5,108.7L52.8,105.4L54.3,102.3L55.9,99.2L57.7,96.2L59.6,93.3L61.7,90.5L63.9,87.8L66.3,85.2L68.8,82.7L71.4,80.2L74.2,77.9L77.1,75.6L80.1,73.5L83.3,71.4L86.6,69.5L90.0,67.6L93.5,65.9L97.2,64.3L101.0,62.7L104.9,61.3L108.9,60.0L113.0,58.8L117.3,57.7L121.7,56.7L126.2,55.8L130.8,55.1L135.6,54.5L140.6,53.9L145.7,53.5L151.2,53.2L157.0,53.1L164.0,53.0Z" fill="none" stroke="#69a622" stroke-width="1.25" stroke-linejoin="round"/>
<path d="M165.5,44.9Q165.4,41.4 168.9,41.4L216.2,41.4Q219.7,41.4 219.8,44.9L222.4,113.5Q222.5,117.0 219.0,117.0L171.3,117.0Q167.8,117.0 167.7,113.5Z" fill="none" stroke="#69a622" stroke-width="1.25"/>
<path d="M164.1,56.3Q164.0,52.8 167.5,52.8L215.0,52.8Q218.5,52.8 218.6,56.3L221.6,124.5Q221.7,128.0 218.2,128.0L170.2,128.0Q166.7,128.0 166.6,124.5Z" fill="none" stroke="#69a622" stroke-width="1.25"/>
<path d="M128.8,170.5Q132.0,169.0 134.2,171.7L158.8,201.6Q161.0,204.3 157.8,205.8L86.7,240.1Q83.5,241.6 81.4,238.8L57.1,207.2Q55.0,204.4 58.2,202.9Z" fill="none" stroke="#69a622" stroke-width="1.25"/>
<path d="M127.8,181.5Q131.0,180.0 133.2,182.7L157.8,211.9Q160.0,214.6 156.9,216.1L85.1,251.3Q82.0,252.8 80.0,250.0L57.5,218.6Q55.5,215.8 58.7,214.3Z" fill="none" stroke="#69a622" stroke-width="1.25"/>
<path d="M262.2,173.6Q264.3,170.8 267.5,172.3L340.1,205.5Q343.3,207.0 341.3,209.9L320.8,239.8Q318.8,242.7 315.6,241.2L242.6,206.4Q239.4,204.9 241.5,202.1Z" fill="none" stroke="#69a622" stroke-width="1.25"/>
<path d="M261.1,184.8Q263.2,182.0 266.4,183.5L339.0,216.7Q342.2,218.2 340.1,221.0L318.7,250.4Q316.6,253.2 313.4,251.7L241.2,217.5Q238.0,216.0 240.1,213.2Z" fill="none" stroke="#69a622" stroke-width="1.25"/>
<path d="M87.3,94.9L89.2,93.2L91.3,91.9L93.7,91.0L96.1,90.6L98.6,90.7L101.1,91.3L103.4,92.3L105.4,93.8L107.1,95.6L108.4,97.8L109.3,100.1L109.7,102.6L109.6,105.1L109.0,107.5L108.0,109.8L106.5,111.8L87.7,133.1L85.8,134.8L83.7,136.1L81.3,137.0L78.9,137.4L76.4,137.3L73.9,136.7L71.6,135.7L69.6,134.2L67.9,132.4L66.6,130.2L65.7,127.9L65.3,125.4L65.4,122.9L66.0,120.5L67.0,118.2L68.5,116.2Z" fill="none" stroke="#69a622" stroke-width="1.25" stroke-linejoin="round"/>
<path d="M86.3,102.9L88.2,101.2L90.3,99.9L92.7,99.0L95.1,98.6L97.6,98.7L100.1,99.3L102.4,100.3L104.4,101.8L106.1,103.6L107.4,105.8L108.3,108.1L108.7,110.6L108.6,113.1L108.0,115.5L107.0,117.8L105.5,119.8L86.7,141.1L84.8,142.8L82.7,144.1L80.3,145.0L77.9,145.4L75.4,145.3L72.9,144.7L70.6,143.7L68.6,142.2L66.9,140.4L65.6,138.2L64.7,135.9L64.3,133.4L64.4,130.9L65.0,128.5L66.0,126.2L67.5,124.2Z" fill="none" stroke="#69a622" stroke-width="1.25" stroke-linejoin="round"/>
<path d="M91.9,105.6L92.6,104.9L93.5,104.3L94.5,103.9L95.5,103.8L96.5,103.8L97.5,104.0L98.4,104.4L99.3,105.0L100.0,105.7L100.6,106.6L100.9,107.6L101.1,108.6L101.1,109.6L100.9,110.6L100.5,111.5L99.9,112.4L80.7,134.8L80.0,135.5L79.1,136.1L78.1,136.5L77.1,136.6L76.1,136.6L75.1,136.4L74.2,136.0L73.3,135.4L72.6,134.7L72.0,133.8L71.7,132.8L71.5,131.8L71.5,130.8L71.7,129.8L72.1,128.9L72.7,128.0Z" fill="none" stroke="#69a622" stroke-width="1.25" stroke-linejoin="round"/>
<path d="M90.3,112.4L91.0,111.7L91.9,111.1L92.9,110.8L93.9,110.6L94.9,110.6L95.9,110.8L96.8,111.2L97.7,111.8L98.4,112.6L99.0,113.4L99.3,114.4L99.5,115.4L99.5,116.4L99.3,117.4L98.9,118.4L98.3,119.2L81.7,138.6L81.0,139.3L80.1,139.9L79.1,140.2L78.1,140.4L77.1,140.4L76.1,140.2L75.2,139.8L74.3,139.2L73.6,138.4L73.0,137.6L72.7,136.6L72.5,135.6L72.5,134.6L72.7,133.6L73.1,132.6L73.7,131.8Z" fill="none" stroke="#69a622" stroke-width="1.25" stroke-linejoin="round"/>
<path d="M323.4,117.1L324.9,119.0L326.0,121.2L326.6,123.6L326.8,126.1L326.4,128.5L325.6,130.8L324.4,132.9L322.8,134.8L320.8,136.2L318.6,137.3L316.3,138.0L313.8,138.1L311.4,137.8L309.1,137.0L307.0,135.8L305.1,134.1L284.4,111.9L282.9,110.0L281.8,107.8L281.2,105.4L281.0,102.9L281.4,100.5L282.2,98.2L283.4,96.1L285.0,94.2L287.0,92.8L289.2,91.7L291.5,91.0L294.0,90.9L296.4,91.2L298.7,92.0L300.8,93.2L302.7,94.9Z" fill="none" stroke="#69a622" stroke-width="1.25" stroke-linejoin="round"/>
<path d="M322.8,123.6L324.3,125.5L325.4,127.7L326.0,130.1L326.2,132.6L325.8,135.0L325.0,137.3L323.8,139.4L322.2,141.3L320.2,142.7L318.0,143.8L315.7,144.5L313.2,144.6L310.8,144.3L308.5,143.5L306.4,142.3L304.5,140.6L283.8,118.4L282.3,116.5L281.2,114.3L280.6,111.9L280.4,109.4L280.8,107.0L281.6,104.7L282.8,102.6L284.4,100.7L286.4,99.3L288.6,98.2L290.9,97.5L293.4,97.4L295.8,97.7L298.1,98.5L300.2,99.7L302.1,101.4Z" fill="none" stroke="#69a622" stroke-width="1.25" stroke-linejoin="round"/>
<path d="M318.6,130.6L319.2,131.4L319.7,132.4L320.0,133.4L320.1,134.5L319.9,135.6L319.6,136.6L319.0,137.5L318.3,138.3L317.5,139.0L316.5,139.5L315.4,139.7L314.4,139.8L313.3,139.7L312.3,139.3L311.3,138.8L310.5,138.1L288.7,114.6L288.1,113.8L287.6,112.8L287.3,111.8L287.2,110.7L287.4,109.6L287.7,108.6L288.3,107.7L289.0,106.9L289.8,106.2L290.8,105.7L291.9,105.5L292.9,105.4L294.0,105.5L295.0,105.9L296.0,106.4L296.8,107.1Z" fill="none" stroke="#f01018" stroke-width="1.8" stroke-linejoin="round"/>
<path d="M318.2,137.5L318.9,138.3L319.4,139.3L319.6,140.3L319.7,141.4L319.6,142.5L319.2,143.5L318.7,144.4L318.0,145.2L317.1,145.9L316.1,146.4L315.1,146.6L314.0,146.7L313.0,146.6L311.9,146.2L311.0,145.7L310.2,145.0L288.4,121.5L287.7,120.7L287.2,119.7L287.0,118.7L286.9,117.6L287.0,116.5L287.4,115.5L287.9,114.6L288.6,113.8L289.5,113.1L290.5,112.6L291.5,112.4L292.6,112.3L293.6,112.4L294.7,112.8L295.6,113.3L296.4,114.0Z" fill="none" stroke="#f01018" stroke-width="1.8" stroke-linejoin="round"/>
<path d="M220.2,252.0L222.6,252.2L225.0,253.0L227.1,254.1L229.0,255.7L230.6,257.6L231.7,259.7L232.5,262.1L232.7,264.5L232.5,266.9L231.7,269.3L230.6,271.4L229.0,273.3L227.1,274.9L225.0,276.0L222.6,276.8L220.2,277.0L183.8,277.0L181.4,276.8L179.0,276.0L176.9,274.9L175.0,273.3L173.4,271.4L172.3,269.3L171.5,266.9L171.3,264.5L171.5,262.1L172.3,259.7L173.4,257.6L175.0,255.7L176.9,254.1L179.0,253.0L181.4,252.2L183.8,252.0Z" fill="none" stroke="#69a622" stroke-width="1.25" stroke-linejoin="round"/>
<path d="M219.7,260.0L222.1,260.2L224.5,261.0L226.6,262.1L228.5,263.7L230.1,265.6L231.2,267.7L232.0,270.1L232.2,272.5L232.0,274.9L231.2,277.3L230.1,279.4L228.5,281.3L226.6,282.9L224.5,284.0L222.1,284.8L219.7,285.0L183.3,285.0L180.9,284.8L178.5,284.0L176.4,282.9L174.5,281.3L172.9,279.4L171.8,277.3L171.0,274.9L170.8,272.5L171.0,270.1L171.8,267.7L172.9,265.6L174.5,263.7L176.4,262.1L178.5,261.0L180.9,260.2L183.3,260.0Z" fill="none" stroke="#69a622" stroke-width="1.25" stroke-linejoin="round"/>
<path d="M219.4,265.8L220.6,265.9L221.8,266.3L222.8,266.8L223.8,267.6L224.6,268.6L225.1,269.6L225.5,270.8L225.6,272.0L225.5,273.2L225.1,274.4L224.6,275.4L223.8,276.4L222.8,277.2L221.8,277.7L220.6,278.1L219.4,278.2L184.2,278.2L183.0,278.1L181.8,277.7L180.8,277.2L179.8,276.4L179.0,275.4L178.5,274.4L178.1,273.2L178.0,272.0L178.1,270.8L178.5,269.6L179.0,268.6L179.8,267.6L180.8,266.8L181.8,266.3L183.0,265.9L184.2,265.8Z" fill="none" stroke="#69a622" stroke-width="1.25" stroke-linejoin="round"/>
<path d="M221.1,273.0L222.0,273.1L222.8,273.3L223.6,273.8L224.3,274.3L224.8,275.0L225.3,275.8L225.5,276.6L225.6,277.5L225.5,278.4L225.3,279.2L224.8,280.0L224.3,280.7L223.6,281.2L222.8,281.7L222.0,281.9L221.1,282.0L182.5,282.0L181.6,281.9L180.8,281.7L180.0,281.2L179.3,280.7L178.8,280.0L178.3,279.2L178.1,278.4L178.0,277.5L178.1,276.6L178.3,275.8L178.8,275.0L179.3,274.3L180.0,273.8L180.8,273.3L181.6,273.1L182.5,273.0Z" fill="none" stroke="#69a622" stroke-width="1.25" stroke-linejoin="round"/>
<path d="M0.0,162.4L392.0,164.7" stroke="#e60a14" stroke-width="1.6" fill="none"/>
<path d="M185.7,0.0L200.6,337.0" stroke="#0a780a" stroke-width="1.5" fill="none"/>
<path d="M209.0,0.0L178.2,337.0" stroke="#0a0ae8" stroke-width="1.6" fill="none"/>
<rect x="286.5" y="105.3" width="1.8" height="1.8" fill="#f0e010"/>
<rect x="316.1" y="105.4" width="1.8" height="1.8" fill="#f0e010"/>
<rect x="315.4" y="112.3" width="1.8" height="1.8" fill="#f0e010"/>
<rect x="285.7" y="112.8" width="1.8" height="1.8" fill="#f0e010"/>
<rect x="288.4" y="138.5" width="1.8" height="1.8" fill="#f0e010"/>
<rect x="287.3" y="145.1" width="1.8" height="1.8" fill="#f0e010"/>
<rect x="317.6" y="139.1" width="1.8" height="1.8" fill="#f0e010"/>
<rect x="316.9" y="145.4" width="1.8" height="1.8" fill="#f0e010"/>
<path d="M301.0,124.5L305.0,128.5M305.0,124.5L301.0,128.5" stroke="#f0e010" stroke-width="1.1" fill="none"/>
<path d="M312.0,84.8L312.0,66.6L319.0,66.6" stroke="#f0e010" stroke-width="1.7" fill="none"/><path d="M312.0,69.3L318.5,69.3" stroke="#d8c818" stroke-width="1" fill="none"/>
</svg></div>
<div class="a" style="left:245px;top:380px;width:395px;height:3px;background:linear-gradient(to bottom,#ece9d8 0,#ece9d8 50%,#aca899 62%,#aca899 100%)"></div><div id="info" class="a" style="overflow:hidden"><div class="l" style="top:0.0px;"><span class="t" style="">Min : 21.71391,9.21518989072153,-5.50000112708984</span></div><div class="l" style="top:11.6px;"><span class="t" style="">Max : 28.36857,18.54531,-3.00000071925734</span></div><div class="l" style="top:23.2px;"><span class="t" style="">Width (X) : 6.65466</span></div><div class="l" style="top:34.8px;"><span class="t" style="">Height (Y) : 9.33012010927847</span></div><div class="l" style="top:46.4px;background:#316ac5;width:379px;left:0;top:46px;height:11.3px;"><span class="t" style="color:#fff;">Depth (Z) 2.5000004078325</span></div><div class="sbv" style="left:379.5px;top:0;width:12.5px;height:66px;background:#f8f8f4"></div><div class="sbbtn" style="left:380.5px;top:1.2px;height:11.8px;width:11.5px"></div><svg class="a" style="left:382.5px;top:4.5px" width="8" height="6" viewBox="0 0 8 6"><path d="M1 5L4 2L7 5" fill="none" stroke="#4d6185" stroke-width="1.8"/></svg><div class="sbbtn" style="left:380.5px;top:37px;height:12.5px;width:11.5px"></div><div class="a" style="left:383.5px;top:40.5px;width:6px;height:6px;background:repeating-linear-gradient(to bottom,#8ea0cc 0,#8ea0cc 1px,transparent 1px,transparent 2px)"></div><div class="sbbtn" style="left:380.5px;top:53px;height:12.5px;width:11.5px"></div><svg class="a" style="left:382.5px;top:57px" width="8" height="6" viewBox="0 0 8 6"><path d="M1 1L4 4L7 1" fill="none" stroke="#4d6185" stroke-width="1.8"/></svg></div>
<div class="a" style="left:0;top:446.5px;width:245px;height:3px;background:#ece9d8"></div>
<div class="a" style="left:245.2px;top:43px;width:2.9px;height:406px;background:linear-gradient(to right,#aeaa96,#c0bda9)"></div>
</body>
</html>
